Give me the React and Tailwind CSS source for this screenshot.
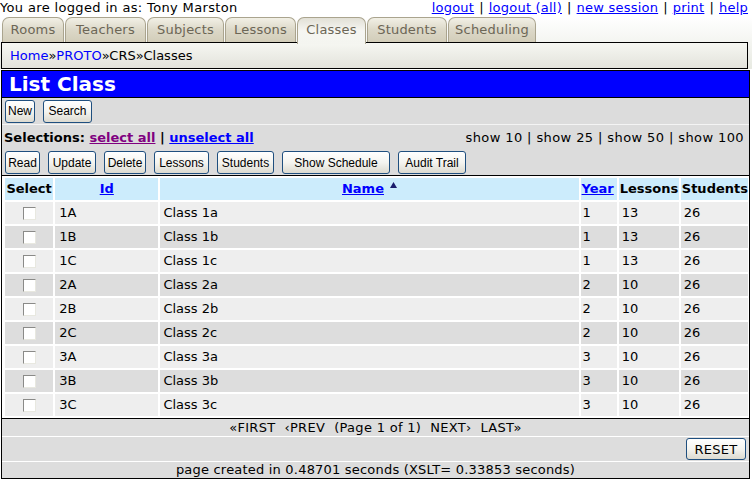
import React from "react";

const rows = [
  ["1A", "Class 1a", "1", "13", "26"],
  ["1B", "Class 1b", "1", "13", "26"],
  ["1C", "Class 1c", "1", "13", "26"],
  ["2A", "Class 2a", "2", "10", "26"],
  ["2B", "Class 2b", "2", "10", "26"],
  ["2C", "Class 2c", "2", "10", "26"],
  ["3A", "Class 3a", "3", "10", "26"],
  ["3B", "Class 3b", "3", "10", "26"],
  ["3C", "Class 3c", "3", "10", "26"],
];

const tabs = [
  ["Rooms", "w-[62px]"],
  ["Teachers", "w-[81px]"],
  ["Subjects", "w-[77px]"],
  ["Lessons", "w-[71px]"],
  ["Classes", "w-[69px]"],
  ["Students", "w-[80px]"],
  ["Scheduling", "w-[88px]"],
];

function Btn({ children, className = "" }) {
  return (
    <button
      className={
        "h-[23px] rounded-[3px] border border-[#1f4f7f] bg-gradient-to-b from-[#ffffff] via-[#f4f4f0] to-[#dcdad0] text-[12px] text-black font-['Liberation_Sans',Arial,sans-serif] leading-none " +
        className
      }
    >
      {children}
    </button>
  );
}

function Box() {
  return (
    <span className="inline-block w-[13px] h-[13px] border border-t-[#8a8a88] border-l-[#8a8a88] border-b-[#e8e8e0] border-r-[#e8e8e0] bg-white align-middle" />
  );
}

export default function App() {
  return (
    <div className="w-[752px] h-[481px] bg-white text-[13px] text-black font-['DejaVu_Sans',Verdana,sans-serif] overflow-hidden">
      <div className="flex justify-between h-[17px] leading-[15px] pr-[4px]">
        <span className="tracking-[0.35px]">You are logged in as: Tony Marston</span>
        <span className="flex gap-[5px] tracking-[0.22px]">
          <a className="text-[#0000ff] underline">logout</a>
          <span>|</span>
          <a className="text-[#0000ff] underline">logout (all)</a>
          <span>|</span>
          <a className="text-[#0000ff] underline">new session</a>
          <span>|</span>
          <a className="text-[#0000ff] underline">print</a>
          <span>|</span>
          <a className="text-[#0000ff] underline">help</a>
        </span>
      </div>
      <div className="bg-gradient-to-b from-[#ffffff] to-[#e8eae2] pr-[4px]">
        <div className="flex items-end h-[25px] pl-[2px] gap-[1px]">
          {tabs.map(([t, w]) => (
            <div
              key={t}
              className={
                w +
                " h-[25px] rounded-t-[7px] border border-b-0 border-[#aaa48e] flex items-center justify-center text-[#6c6656] tracking-[0.2px] " +
                (t === "Classes"
                  ? "bg-gradient-to-b from-[#e2e0d6] via-[#f6f6f2] to-[#f4f5f0] relative z-10 h-[27px] -mb-[2px] pb-[2px]"
                  : "bg-gradient-to-b from-[#f2f0e6] via-[#dcd8c8] to-[#d2cdb9]")
              }
            >
              {t}
            </div>
          ))}
        </div>
        <div className="ml-[1px] h-[27px] border border-black bg-gradient-to-b from-[#f6f7f2] to-[#e3e3dc] flex items-center pl-[8px]">
          <a className="text-[#0000ff]">Home</a>»<a className="text-[#0000ff]">PROTO</a>»CRS»Classes
        </div>
      </div>
      <div className="h-[1px] bg-white" />
      <div className="ml-[1px] mr-[2px] border border-black border-b-0 h-[409px] flex flex-col bg-[#dcdcdc]">
        <div className="h-[27px] shrink-0 bg-[#0000ff] border-b border-black flex items-center pl-[7px] text-white font-bold text-[20px]">
          List Class
        </div>
        <div className="h-[27px] shrink-0 flex items-center gap-[8px] pl-[3px] border-b border-[#f4f4f4]">
          <Btn className="w-[30px] h-[22px]">New</Btn>
          <Btn className="w-[49px] h-[22px]">Search</Btn>
        </div>
        <div className="h-[26px] shrink-0 flex items-center justify-between pl-[2px] pr-[5px]">
          <span className="font-bold">
            Selections: <a className="text-[#800080] underline">select all</a> | <a className="text-[#0000ff] underline">unselect all</a>
          </span>
          <span className="tracking-[0.4px]">show 10 | show 25 | show 50 | show 100</span>
        </div>
        <div className="h-[24px] shrink-0 flex items-start gap-[8px] pl-[3px]">
          <Btn className="w-[35px]">Read</Btn>
          <Btn className="w-[48px]">Update</Btn>
          <Btn className="w-[42px]">Delete</Btn>
          <Btn className="w-[55px]">Lessons</Btn>
          <Btn className="w-[57px]">Students</Btn>
          <Btn className="w-[108px]">Show Schedule</Btn>
          <Btn className="w-[68px]">Audit Trail</Btn>
        </div>
        <div className="border-t border-black bg-white pl-[1px] shrink-0">
          <table className="table-fixed border-separate border-spacing-[2px] w-[747px]">
            <colgroup>
              <col className="w-[48px]" />
              <col className="w-[103px]" />
              <col className="w-[417px]" />
              <col className="w-[36px]" />
              <col className="w-[60px]" />
              <col className="w-[67px]" />
            </colgroup>
            <thead>
              <tr className="h-[22px] bg-[#ccecfc] font-bold">
                <td className="px-[1px] text-center">Select</td>
                <td className="text-center"><a className="text-[#0000ff] underline">Id</a></td>
                <td className="text-center">
                  <a className="text-[#0000ff] underline">Name</a>
                  <svg className="inline-block ml-[6px] -mt-[10px]" width="7" height="6" viewBox="0 0 7 6">
                    <path d="M3.5 0 L7 6 L0 6 Z" fill="#1c1c6c" />
                  </svg>
                </td>
                <td className="px-[1px]"><a className="text-[#0000ff] underline">Year</a></td>
                <td className="px-[1px]">Lessons</td>
                <td className="px-[1px]">Students</td>
              </tr>
            </thead>
            <tbody>
              {rows.map((r, i) => (
                <tr key={r[0]} className={"h-[22px] " + (i % 2 === 0 ? "bg-[#eeeeee]" : "bg-[#dddddd]")}>
                  <td className="text-center"><Box /></td>
                  <td className="pl-[4px]">{r[0]}</td>
                  <td className="pl-[3px]">{r[1]}</td>
                  <td className="pl-[2px]">{r[2]}</td>
                  <td className="pl-[3px]">{r[3]}</td>
                  <td className="pl-[3px]">{r[4]}</td>
                </tr>
              ))}
            </tbody>
          </table>
        </div>
        <div className="border-t border-black h-[19px] shrink-0 bg-[#dddddd] flex items-center justify-center gap-[9px] border-b border-b-white tracking-[0.3px]">
          <span>«FIRST</span>
          <span>‹PREV</span>
          <span>(Page 1 of 1)</span>
          <span>NEXT›</span>
          <span>LAST»</span>
        </div>
        <div className="h-[25px] shrink-0 bg-[#dddddd] flex items-center justify-end pr-[3px] border-b border-white">
          <button className="w-[60px] h-[22px] rounded-[3px] border border-[#1f4f7f] bg-gradient-to-b from-[#ffffff] via-[#f4f4f0] to-[#dcdad0] text-[13px] leading-none tracking-[0.3px]">
            RESET
          </button>
        </div>
        <div className="flex-1 bg-[#dddddd] flex items-center justify-center border-b border-black">
          <span className="leading-[16px] tracking-[0.2px]">page created in 0.48701 seconds (XSLT= 0.33853 seconds)</span>
        </div>
      </div>
    </div>
  );
}
